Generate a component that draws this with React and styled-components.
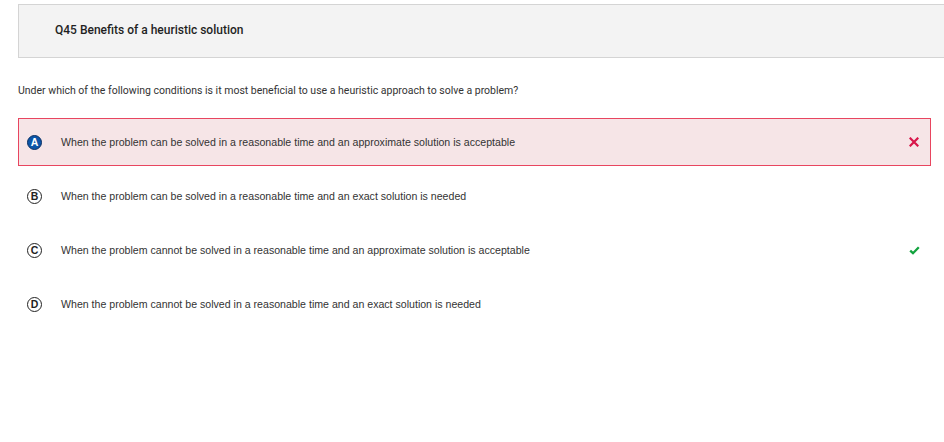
import React from "react";
import styled, { createGlobalStyle } from "styled-components";

const Global = createGlobalStyle`
  html, body { margin: 0; padding: 0; background: #fff; }
  body { font-family: Roboto, "Liberation Sans", sans-serif; }
`;

const Page = styled.div`
  padding: 4px 0 0 18px;
`;

const Header = styled.div`
  height: 54px;
  box-sizing: border-box;
  background: #f3f3f3;
  border: 1px solid #d4d4d4;
  border-right: none;
  display: flex;
  align-items: center;
  padding: 0 0 2px 36px;
`;

const Title = styled.h2`
  margin: 0;
  font-family: Roboto, sans-serif;
  font-weight: 500;
  font-size: 12px;
  color: #1f1f1f;
`;

const Question = styled.p`
  margin: 26px 0 0 0;
  font-family: Roboto, sans-serif;
  font-size: 10.5px;
  color: #333;
  line-height: 14px;
`;

const Options = styled.div`
  margin-top: 20px;
  width: 913px;
  display: flex;
  flex-direction: column;
  gap: 6px;
`;

const Option = styled.div`
  height: 48px;
  box-sizing: border-box;
  display: flex;
  align-items: center;
  padding: 0 10px 0 8px;
  border: 1px solid ${(p) => (p.$wrong ? "#e8455f" : "transparent")};
  background: ${(p) => (p.$wrong ? "#f6e5e7" : "transparent")};
`;

const Letter = styled.span`
  width: 15px;
  height: 15px;
  box-sizing: border-box;
  border-radius: 50%;
  display: inline-flex;
  align-items: center;
  justify-content: center;
  font-family: "Liberation Sans", Arial, sans-serif;
  font-weight: 700;
  font-size: 10.5px;
  line-height: 1;
  flex: none;
  border: 1.3px solid ${(p) => (p.$selected ? "#0a2f63" : "#222")};
  background: ${(p) => (p.$selected ? "#0d55a8" : "#fff")};
  color: ${(p) => (p.$selected ? "#fff" : "#222")};
`;

const Text = styled.span`
  margin-left: 19px;
  flex: 1;
  font-family: "Liberation Sans", Arial, sans-serif;
  font-size: 10.6px;
  color: #333;
`;

const Mark = styled.span`
  width: 12px;
  height: 12px;
  display: inline-flex;
  align-items: center;
  justify-content: center;
`;

const Cross = () => (
  <svg width="10" height="10" viewBox="0 0 10 10">
    <path d="M1.5 1.5 L8.5 8.5 M8.5 1.5 L1.5 8.5" stroke="#d8164a" strokeWidth="2.2" strokeLinecap="square" />
  </svg>
);

const Check = () => (
  <svg width="11" height="9" viewBox="0 0 11 9">
    <path d="M1.2 4.6 L4 7.2 L9.8 1.3" fill="none" stroke="#12a33e" strokeWidth="2.3" />
  </svg>
);

const options = [
  { l: "A", t: "When the problem can be solved in a reasonable time and an approximate solution is acceptable", selected: true, mark: "x" },
  { l: "B", t: "When the problem can be solved in a reasonable time and an exact solution is needed" },
  { l: "C", t: "When the problem cannot be solved in a reasonable time and an approximate solution is acceptable", mark: "check" },
  { l: "D", t: "When the problem cannot be solved in a reasonable time and an exact solution is needed" },
];

export default function App() {
  return (
    <>
      <Global />
      <Page>
        <Header>
          <Title>Q45 Benefits of a heuristic solution</Title>
        </Header>
        <Question>
          Under which of the following conditions is it most beneficial to use a heuristic approach to solve a problem?
        </Question>
        <Options>
          {options.map((o) => (
            <Option key={o.l} $wrong={o.mark === "x"}>
              <Letter $selected={o.selected}>{o.l}</Letter>
              <Text>{o.t}</Text>
              <Mark>{o.mark === "x" ? <Cross /> : o.mark === "check" ? <Check /> : null}</Mark>
            </Option>
          ))}
        </Options>
      </Page>
    </>
  );
}
